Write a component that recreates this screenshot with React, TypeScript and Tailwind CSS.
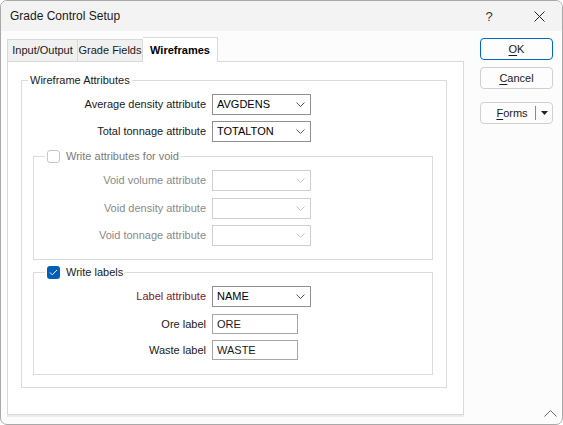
import React from 'react';

const Chevron: React.FC<{ color: string }> = ({ color }) => (
    <svg width="9" height="5" viewBox="0 0 9 5" className="shrink-0">
        <polyline points="0.5,0.5 4.5,4.5 8.5,0.5" fill="none" stroke={color} strokeWidth="1" />
    </svg>
);

interface ComboProps {
    value?: string;
    disabled?: boolean;
}

const Combo: React.FC<ComboProps> = ({ value, disabled }) => (
    <div
        className={`w-[99px] h-[21px] flex items-center justify-between pl-[4px] pr-[5px] bg-white border ${
            disabled ? 'border-[#cfcfcf]' : 'border-[#8f8f8f]'
        }`}
    >
        <span className="text-[#000]">{value}</span>
        <Chevron color={disabled ? '#c4c4c4' : '#5a5a5a'} />
    </div>
);

const TextBox: React.FC<{ value: string }> = ({ value }) => (
    <div className="w-[86px] h-[20px] flex items-center pl-[4px] bg-white border border-[#a6a6a6]">{value}</div>
);

interface RowProps {
    label: string;
    labelWidth: string;
    labelClass?: string;
    className?: string;
    children: React.ReactNode;
}

const Row: React.FC<RowProps> = ({ label, labelWidth, labelClass = 'text-[#1a1a1a]', className = '', children }) => (
    <div className={`flex items-center ${className}`}>
        <span className={`${labelWidth} mr-[6px] text-right whitespace-nowrap ${labelClass}`}>{label}</span>
        {children}
    </div>
);

const App: React.FC = () => {
    return (
        <div className="w-[563px] h-[425px] bg-white font-['Liberation_Sans',Arial,sans-serif] text-[11px] leading-[15px] text-[#1a1a1a]">
            <div className="w-full h-full flex flex-col border border-[#a9a9a9] rounded-[7px] overflow-hidden bg-[#fcfcfc]">
                {/* title bar */}
                <div className="h-[30px] shrink-0 flex items-center bg-[#f3f3f3] pl-[9px]">
                    <span className="text-[12px] text-[#1a1a1a]">Grade Control Setup</span>
                    <div className="ml-auto flex items-center h-full">
                        <span className="w-[46px] text-center text-[13px] text-[#333]">?</span>
                        <span className="w-[46px] ml-[4px] flex justify-center">
                            <svg width="11" height="11" viewBox="0 0 11 11">
                                <path d="M0.5 0.5 L10.5 10.5 M10.5 0.5 L0.5 10.5" stroke="#222" strokeWidth="1" />
                            </svg>
                        </span>
                    </div>
                </div>

                <div className="flex-1 flex pl-[6px] pt-[6px]">
                    {/* tabs */}
                    <div className="flex flex-col">
                        <div className="flex items-end h-[24px]">
                            <div className="w-[71px] h-[22px] flex items-center justify-center bg-[#f0f0f0] border border-b-0 border-[#d9d9d9]">
                                Input/Output
                            </div>
                            <div className="w-[65px] h-[22px] flex items-center justify-center bg-[#f0f0f0] border border-l-0 border-b-0 border-[#d9d9d9]">
                                Grade Fields
                            </div>
                            <div className="relative z-10 -mb-px w-[75px] h-[25px] flex items-center justify-center bg-white border border-l-0 border-b-0 border-[#d9d9d9] font-bold text-[#000]">
                                Wireframes
                            </div>
                        </div>
                        <div className="w-[457px] h-[354px] bg-white border border-[#d9d9d9] shadow-[0_2px_0_#ececec]">
                            <fieldset className="ml-[13px] mt-[11px] w-[426px] border border-[#dcdcdc] pb-[12px]">
                                <legend className="ml-[6px] px-[2px]">Wireframe Attributes</legend>
                                <div className="pt-[6px]">
                                    <Row label="Average density attribute" labelWidth="w-[184px]">
                                        <Combo value="AVGDENS" />
                                    </Row>
                                    <Row label="Total tonnage attribute" labelWidth="w-[184px]" className="mt-[6px]">
                                        <Combo value="TOTALTON" />
                                    </Row>
                                </div>

                                <fieldset className="ml-[11px] mt-[7px] w-[400px] border border-[#dcdcdc] pb-[13px]">
                                    <legend className="ml-[11px] px-[2px] flex items-center">
                                        <span className="w-[13px] h-[13px] rounded-[3px] border border-[#c6c6c6] bg-white" />
                                        <span className="ml-[6px] text-[#7a7a7a]">Write attributes for void</span>
                                    </legend>
                                    <div className="pt-[6px]">
                                        <Row label="Void volume attribute" labelWidth="w-[172px]" labelClass="text-[#8a8a8a]">
                                            <Combo disabled />
                                        </Row>
                                        <Row label="Void density attribute" labelWidth="w-[172px]" labelClass="text-[#8a8a8a]" className="mt-[7px]">
                                            <Combo disabled />
                                        </Row>
                                        <Row label="Void tonnage attribute" labelWidth="w-[172px]" labelClass="text-[#8a8a8a]" className="mt-[6px]">
                                            <Combo disabled />
                                        </Row>
                                    </div>
                                </fieldset>

                                <fieldset className="ml-[11px] mt-[5px] w-[400px] border border-[#dcdcdc] pb-[14px]">
                                    <legend className="ml-[11px] px-[2px] flex items-center">
                                        <span className="w-[13px] h-[13px] rounded-[3px] bg-[#005fb8] flex items-center justify-center">
                                            <svg width="9" height="7" viewBox="0 0 9 7">
                                                <polyline points="1,3.5 3.3,5.8 8,1" fill="none" stroke="#fff" strokeWidth="1" />
                                            </svg>
                                        </span>
                                        <span className="ml-[6px]">Write labels</span>
                                    </legend>
                                    <div className="pt-[6px]">
                                        <Row label="Label attribute" labelWidth="w-[172px]" labelClass="text-[#80182a]">
                                            <Combo value="NAME" />
                                        </Row>
                                        <Row label="Ore label" labelWidth="w-[172px]" className="mt-[7px]">
                                            <TextBox value="ORE" />
                                        </Row>
                                        <Row label="Waste label" labelWidth="w-[172px]" className="mt-[6px]">
                                            <TextBox value="WASTE" />
                                        </Row>
                                    </div>
                                </fieldset>
                            </fieldset>
                        </div>
                    </div>

                    {/* buttons */}
                    <div className="flex-1 flex flex-col pl-[16px] pt-[1px]">
                        <button className="w-[73px] h-[22px] rounded-[4px] border border-[#0067c0] bg-[#fdfdfd] text-[#1a1a1a]">
                            <span className="underline underline-offset-2">O</span>K
                        </button>
                        <button className="mt-[7px] w-[73px] h-[22px] rounded-[4px] border border-[#d0d0d0] bg-[#fdfdfd] text-[#1a1a1a]">
                            <span className="underline underline-offset-2">C</span>ancel
                        </button>
                        <button className="mt-[13px] w-[73px] h-[22px] rounded-[4px] border border-[#d0d0d0] bg-[#fdfdfd] text-[#1a1a1a] flex items-center">
                            <span className="flex-1 text-center pl-[8px]">
                                <span className="underline underline-offset-2">F</span>orms
                            </span>
                            <span className="w-px h-[14px] bg-[#8a8a8a]" />
                            <span className="w-[16px] flex justify-center">
                                <svg width="7" height="4" viewBox="0 0 7 4">
                                    <polygon points="0,0 7,0 3.5,4" fill="#222" />
                                </svg>
                            </span>
                        </button>
                        <div className="mt-auto self-end mr-[5px] mb-[7px]">
                            <svg width="13" height="8" viewBox="0 0 13 8">
                                <polyline points="0.5,7.5 6.5,1.5 12.5,7.5" fill="none" stroke="#6a6a6a" strokeWidth="1" />
                            </svg>
                        </div>
                    </div>
                </div>
            </div>
        </div>
    );
};

export default App;
